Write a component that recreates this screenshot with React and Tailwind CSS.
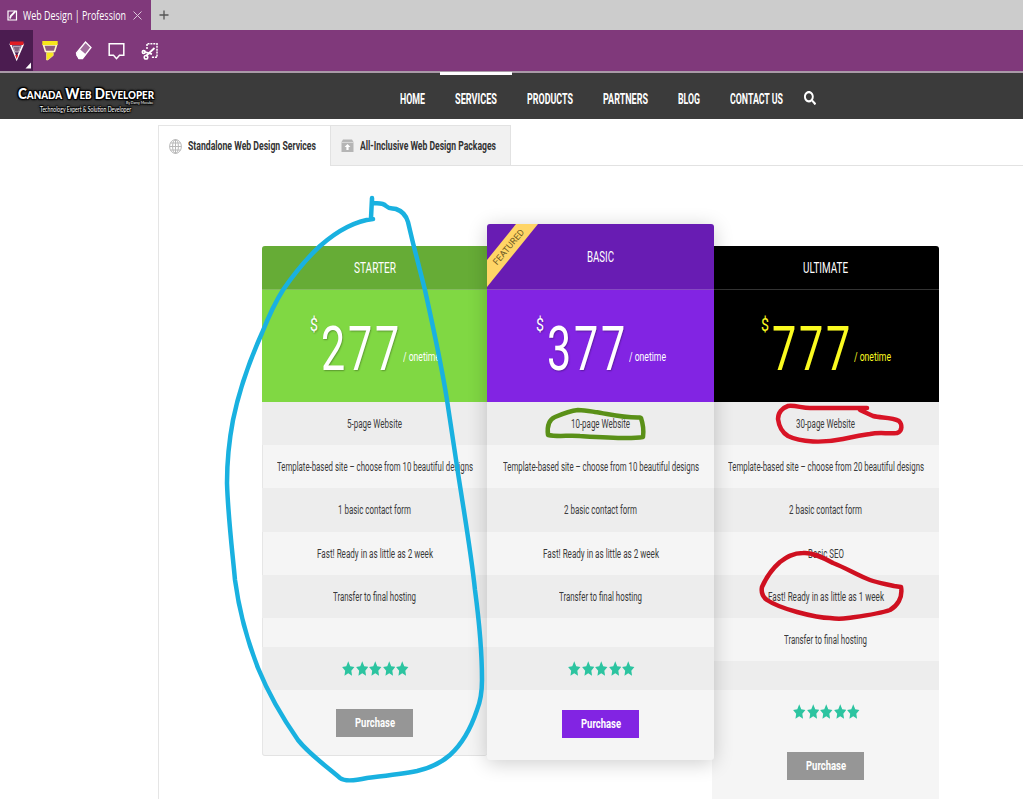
import React, { useLayoutEffect, useRef, useState } from 'react';
import { FaSearch } from 'react-icons/fa';

const navItems = [
  { label: 'HOME', width: 25 },
  { label: 'SERVICES', width: 42, active: true },
  { label: 'PRODUCTS', width: 46 },
  { label: 'PARTNERS', width: 45 },
  { label: 'BLOG', width: 22 },
  { label: 'CONTACT US', width: 53 },
];

const plans = [
  {
    name: 'STARTER',
    nameWidth: 42,
    price: '277',
    card: 'mt-[22px] h-[510px] w-[225px] rounded-[3px] border-b border-[#e3e3e3] shadow-[inset_1px_0_0_#e6e6e6]',
    head: 'h-[44px] bg-[#66ac36] rounded-tl-[3px] text-white',
    body: 'bg-[#80d843] text-white [text-shadow:1px_1px_2px_rgba(0,0,0,0.3)]',
    button: 'bg-[#969696] mt-[19px]',
    features: [
      ['5-page Website', 55],
      ['Template-based site – choose from 10 beautiful designs', 196],
      ['1 basic contact form', 73],
      ['Fast! Ready in as little as 2 week', 116],
      ['Transfer to final hosting', 83],
    ],
  },
  {
    name: 'BASIC',
    nameWidth: 27,
    price: '377',
    featured: true,
    card: 'relative z-10 h-[536px] w-[227px] rounded-[3px] shadow-[0_3px_20px_rgba(0,0,0,0.2)]',
    head: 'h-[66px] bg-[#681cb3] rounded-t-[3px] text-white',
    body: 'bg-[#8224e3] text-white [text-shadow:1px_1px_2px_rgba(0,0,0,0.3)]',
    button: 'bg-[#8224e3] mt-[20.5px]',
    features: [
      ['10-page Website', 59],
      ['Template-based site – choose from 10 beautiful designs', 196],
      ['2 basic contact form', 73],
      ['Fast! Ready in as little as 2 week', 116],
      ['Transfer to final hosting', 83],
    ],
  },
  {
    name: 'ULTIMATE',
    nameWidth: 45,
    price: '777',
    card: 'mt-[22px] -ml-[2px] h-[560px] w-[227px] rounded-[3px]',
    head: 'h-[44px] bg-black rounded-tr-[3px] text-white',
    body: 'bg-black text-[#fbfb20]',
    button: 'bg-[#969696] mt-[19px]',
    features: [
      ['30-page Website', 59],
      ['Template-based site – choose from 20 beautiful designs', 196],
      ['2 basic contact form', 73],
      ['Basic SEO', 36],
      ['Fast! Ready in as little as 1 week', 116],
      ['Transfer to final hosting', 83],
    ],
  },
];

// Squeezes a line of text into the given width, for the condensed look
const FitText = ({ width, className = '', children }) => {
  const ref = useRef(null);
  const [scale, setScale] = useState(1);

  useLayoutEffect(() => {
    setScale(width / ref.current.getBoundingClientRect().width);
  }, [width]);

  return (
    <span className={`inline-block whitespace-nowrap ${className}`} style={{ width }}>
      <span ref={ref} className="inline-block origin-left" style={{ transform: `scaleX(${scale})` }}>
        {children}
      </span>
    </span>
  );
};

const BrowserBar = () => (
  <div className="flex h-[30px] bg-[#cccccc]">
    <div className="flex w-[151px] items-center bg-[#80397b] pt-[1px] pl-[7px] text-white">
      <svg width="11" height="11" viewBox="0 0 11 11" fill="none" stroke="white" strokeWidth="1.2">
        <path d="M1 1h8.500v9H1z" />
        <path d="M3 8.500l0.800-2.500L8.500 1.200" strokeWidth="1.8" />
      </svg>
      <FitText width={103} className="ml-[5px] font-['Open_Sans',sans-serif] text-[12px]">
        Web Design | Profession
      </FitText>
      <svg className="ml-[7px]" width="9" height="9" viewBox="0 0 9 9" stroke="#dcc5da" strokeWidth="1">
        <path d="M0.5 0.5l8 8M8.5 0.5l-8 8" />
      </svg>
    </div>
    <svg className="mt-[10px] ml-[8px]" width="10" height="10" viewBox="0 0 10 10" stroke="#555" strokeWidth="1.3">
      <path d="M5 0.5v9M0.5 5h9" />
    </svg>
  </div>
);

const NoteToolbar = () => (
  <div className="flex h-[41px] bg-[#80397b]">
    <div className="w-[33px] bg-[#4b1c50]">
      <svg width="33" height="41" viewBox="0 0 33 41" fill="none">
        <path d="M10.5 14.5L16.7 29l6.3-14.5z" fill="#4b1c50" stroke="white" strokeWidth="1.7" />
        <path d="M13 16.500h7.500l-2 5.500h-3.500z" fill="#80647f" stroke="#efe4ef" strokeWidth="0.6" />
        <path d="M10 11.5h13.5v3.5H10z" fill="#e01b24" />
        <path d="M15.2 25h3l-1.500 4z" fill="#e01b24" />
        <path d="M31 32.5V38.5h-5.5z" fill="white" />
      </svg>
    </div>
    <svg width="130" height="41" viewBox="33 0 130 41" fill="none">
      {/* highlighter */}
      <path d="M43.500 15h13l-2 6.500h-9z" fill="#8f5a80" stroke="#fff6c8" strokeWidth="1.6" />
      <path d="M42.3 11h15.4v4H42.3z" fill="#f7e71c" />
      <path d="M46.5 22.5h6.8v3l-5.5 4.5h-1.3z" fill="#f7e71c" stroke="#fff9a0" strokeWidth="0.6" />
      {/* eraser */}
      <path d="M76.500 23l9-11 5.500 5.500-8.500 11h-3.500z" fill="#9f6b9b" stroke="white" strokeWidth="1.3" />
      <path d="M79.500 19l6.500 5.500-3.800 4.500h-3.500l-2.700-4z" fill="white" />
      {/* comment */}
      <path d="M109.2 13.8h14.6v11.4h-4.3l-3 3.5-3-3.5h-4.3z" stroke="white" strokeWidth="1.5" />
      {/* clip */}
      <path d="M147 19v-5.300h10v13.600h-6" stroke="white" strokeWidth="1.500" strokeDasharray="2 0.900" />
      <path d="M143.500 21.500l8.500 2.700M154.500 18l-8.500 8" stroke="white" strokeWidth="1.8" />
      <circle cx="143.700" cy="22" r="1.5" stroke="white" strokeWidth="1.4" />
      <circle cx="146" cy="27.300" r="1.8" stroke="white" strokeWidth="1.5" />
    </svg>
  </div>
);

const SiteHeader = () => (
  <div className="flex h-[48px] border-t-2 border-[#a99aa8] bg-[#3b3b3b] text-white">
    <div className="w-[400px] pt-[14px] pl-[18px] font-['Lato',sans-serif] [text-shadow:-1px_-1px_1px_#000,1px_-1px_1px_#000,-1px_1px_1px_#000,1px_1px_1px_#000,0_0_3px_#000,0_0_3px_#000]">
      <div className="flex h-[13px] items-center">
        <FitText width={136} className="text-[15px] leading-[13px] font-black [font-variant:small-caps]">
          Canada Web Developer
        </FitText>
      </div>
      <div className="flex h-[5px] items-end justify-end pr-[247px]">
        <FitText width={27} className="text-[4px] leading-[4px]">By Darcy Mccube</FitText>
      </div>
      <div className="flex h-[9px] items-center pl-[22px]">
        <FitText width={91} className="text-[8px] leading-[9px]">Technology Expert &amp; Solution Developer</FitText>
      </div>
    </div>
    <nav className="flex gap-[30px] text-[14px] font-bold">
      {navItems.map((item) => (
        <div key={item.label} className="relative flex items-center pt-[6px]">
          {item.active && <div className="absolute -top-[1px] -left-[15px] h-[3px] w-[72px] bg-white" />}
          <FitText width={item.width}>{item.label}</FitText>
        </div>
      ))}
    </nav>
    <svg className="mt-[18px] ml-[21px] h-[14px] w-[12px]" viewBox="0 0 512 512" preserveAspectRatio="none">
      <FaSearch size={512} />
    </svg>
  </div>
);

const ServiceTabs = () => (
  <div className="flex h-[41px] text-[12px] font-bold text-[#333]">
    <div className="flex w-[171px] items-center border-t border-[#e5e5e5] pl-[10px]">
      <svg width="13" height="15" viewBox="0 0 13 15" fill="none" stroke="#b8b8b8">
        <ellipse cx="6.5" cy="7.5" rx="5.9" ry="6.9" />
        <ellipse cx="6.5" cy="7.5" rx="2.9" ry="6.9" />
        <path d="M6.5 0.5v14M0.5 7.5h12M1.5 4h10M1.5 11h10" />
      </svg>
      <FitText width={128} className="ml-[6px]">Standalone Web Design Services</FitText>
    </div>
    <div className="flex w-[181px] items-center border border-[#e2e2e2] bg-[#f1f1f1] pl-[10px]">
      <svg width="13" height="14" viewBox="0 0 13 14">
        <path d="M2 0.5h9l1.5 2.5v10H0.5V3z" fill="#b5b5b5" />
        <path d="M0.5 3.4h12" stroke="#e5e5e5" strokeWidth="0.8" />
        <path d="M6.5 5l3 3H7.6v3H5.4V8H3.5z" fill="white" />
      </svg>
      <FitText width={136} className="ml-[6px]">All-Inclusive Web Design Packages</FitText>
    </div>
    <div className="flex-1 border-b border-[#e2e2e2]" />
  </div>
);

const Star = () => (
  <svg width="12.5" height="15" viewBox="0 0 24 24" preserveAspectRatio="none" fill="#2cc4a0">
    <path d="M12 0.500l3.800 7.700 8 1.200-5.900 6 1.400 8.300L12 19.700l-7.300 4 1.400-8.300-5.900-6 8-1.200z" />
  </svg>
);

const PlanCard = ({ plan }) => (
  <div className={`flex shrink-0 flex-col bg-[#f5f5f5] ${plan.card}`}>
    <div className={`flex items-center justify-center border-b border-b-white/20 pt-[1px] text-[14px] ${plan.head}`}>
      <FitText width={plan.nameWidth}>{plan.name}</FitText>
    </div>
    {plan.featured && (
      <div className="absolute top-0 left-0 h-[64px] w-[52px] bg-[#ffd566] [clip-path:polygon(29px_0,51px_0,0_63px,0_36px)]">
        <div className="absolute top-[18px] left-[1px] flex h-[13px] w-[40px] -rotate-[50deg] items-center text-[9px] text-[#705c25]">
          <FitText width={38}>FEATURED</FitText>
        </div>
      </div>
    )}
    <div className={`flex h-[112px] justify-center ${plan.body}`}>
      <FitText width={8} className="mt-[23px] text-[18px] leading-[24px]">$</FitText>
      <FitText width={81} className="mt-[27px] ml-[3px] text-[62px] leading-[64px] tracking-[4px]">
        {plan.price}
      </FitText>
      <FitText width={37} className="mt-[59px] ml-[1px] text-[12px] leading-[16px] [text-shadow:none]">/ onetime</FitText>
    </div>
    <div className="text-[12px] text-[#3a3a3a]">
      {plan.features.map(([text, width]) => (
        <div key={text} className="flex h-[43.2px] items-center justify-center pt-[1px] odd:bg-[#ededed]">
          <FitText width={width}>{text}</FitText>
        </div>
      ))}
      <div className="h-[28.6px] odd:bg-[#ededed]" />
      <div className="flex h-[43.2px] items-center justify-center gap-[1px] pt-[1px] pl-[2px] odd:bg-[#ededed]">
        {[1, 2, 3, 4, 5].map((n) => (
          <Star key={n} />
        ))}
      </div>
    </div>
    <button className={`flex h-[28px] w-[77px] shrink-0 items-center justify-center self-center text-[12px] font-bold text-white ${plan.button}`}>
      <FitText width={40}>Purchase</FitText>
    </button>
  </div>
);

// Freehand ink strokes drawn over the page
const InkLayer = () => (
  <svg
    className="absolute top-0 left-0 z-20"
    width="1023"
    height="799"
    viewBox="0 0 1023 799"
    fill="none"
    strokeWidth="4.5"
    strokeLinecap="round"
    strokeLinejoin="round"
  >
    <path
      stroke="#19b1e0"
      d="M373 219C355 221 337 231 320 246C306 259 294 274 283 290C274 304 268 318 262 333C249 362 239 391 233 420C229 441 227 462 227 483C228 516 232 548 235 580C239 610 247 640 258 668C269 695 284 720 298 740C309 754 326 766 340 778C345 782 358 780 367 778C384 776 402 774 417 771C430 768 441 763 450 755C462 744 471 728 477 710C481 700 482 690 482 680C482 650 479 620 475 590C471 552 464 512 458 473L447 400C441 362 433 327 425 290L413 243L408 222C406 215 402 211 396 209C392 208 389 209 386 206C382 202 377 204 372 203V198L371 218"
    />
    <path
      stroke="#5a9018"
      d="M640 417.500C622 418 609 414 595 412C589 411 584 410 578 410C569 411 562 414 555 417C548 420 547 427 548 435C558 437 569 435 580 436C596 437 611 438 626 438C631 438 637 438 643 437C644 430 643 424 641 418"
    />
    <path
      stroke="#d81426"
      d="M867 408H810C802 408 795 405 788 406C782 408 778 413 778 419C779 427 783 433 788 436C796 440 805 441 813 441.500C823 442 833 441 843 439C852 437 861 435 870 434C879 432 888 434 897 433C903 431 902 424 899 421C892 417 881 418 873 416L860 410"
    />
    <path
      stroke="#cf1020"
      d="M894 586C886 584 878 583 870 580C857 575 846 568 833 563C822 557 812 552 803 553C793 553 787 557 780 562C772 569 766 578 762 587C761 592 763 597 767 600C776 606 786 609 797 612C808 615 819 618 830 618C836 619 842 619 848 618C862 616 879 614 890 610C897 606 903 598 901 587L894 586"
    />
  </svg>
);

const App = () => {
  return (
    <div className="relative h-[799px] w-[1023px] overflow-hidden bg-white font-['Roboto',sans-serif]">
      <BrowserBar />
      <NoteToolbar />
      <SiteHeader />
      <main className="mt-[6px] ml-[158px] h-[674px] border-l border-[#e5e5e5]">
        <ServiceTabs />
        <div className="mt-[58px] ml-[103px] flex items-start">
          {plans.map((plan) => (
            <PlanCard key={plan.name} plan={plan} />
          ))}
        </div>
      </main>
      <InkLayer />
    </div>
  );
};

export default App;
